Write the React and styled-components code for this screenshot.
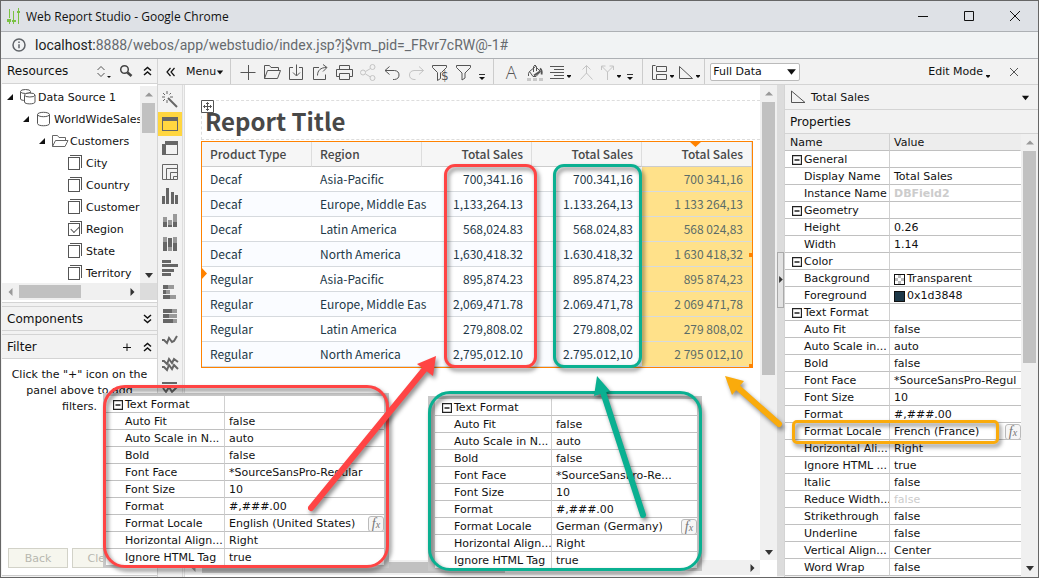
import * as React from "react";
import styled, { createGlobalStyle } from "styled-components";

const GlobalStyle = createGlobalStyle`
  * {
    box-sizing: border-box;
  }
  body {
    margin: 0;
    background: #f2f2f2;
    color: #111;
    font-family: "DejaVu Sans", Verdana, sans-serif;
    font-size: 11px;
  }
  button, select, input {
    font: inherit;
    color: inherit;
    margin: 0;
  }
`;

const Window = styled.div`
  display: flex;
  flex-direction: column;
  min-height: 100vh;
  border: 1px solid #666;
  overflow: hidden;
`;

const TitleBar = styled.header`
  display: flex;
  align-items: center;
  height: 31px;
  padding-left: 6px;
  gap: 6px;
  background: #dee1e6;
  border-bottom: 1px solid #adb0b4;
  font-family: "Open Sans", "Noto Sans", sans-serif;
  font-size: 12px;
`;

const WindowTitle = styled.span`
  flex: 1;
`;

const WindowControls = styled.div`
  display: flex;
`;

const WindowButton = styled.button`
  display: flex;
  align-items: center;
  justify-content: center;
  width: 46px;
  height: 28px;
  padding: 0;
  border: 0;
  background: none;
`;

const AddressBar = styled.div`
  display: flex;
  align-items: center;
  gap: 9px;
  height: 27px;
  padding-left: 11px;
  background: #f1f3f4;
  border-bottom: 1px solid #adb0b4;
  font-family: Roboto, "Noto Sans", sans-serif;
  font-size: 14px;
  color: #666a6e;

  b {
    font-weight: 400;
    color: #222;
  }
`;

const Workspace = styled.div`
  display: flex;
  flex: 1;
`;

const Sidebar = styled.aside`
  display: flex;
  flex-direction: column;
  width: 157px;
  flex: none;
  padding-left: 1px;
  border-right: 1px solid #d4d4d4;
`;

const PanelHeader = styled.div`
  display: flex;
  align-items: center;
  height: 25px;
  flex: none;
  padding: 0 1px 0 5px;
  margin-top: ${(p) => p.$gap || 0}px;
  background: #f2f2f2;
  border: solid #d4d4d4;
  border-width: ${(p) => (p.$gap ? "1px 0" : "0 0 1px")};
`;

const PanelTitle = styled.h2`
  flex: 1;
  margin: 0;
  font-size: 12px;
  font-weight: 400;
`;

const IconButton = styled.button`
  display: flex;
  align-items: center;
  justify-content: ${(p) => (p.$menu ? "flex-start" : "center")};
  width: ${(p) => p.$width || 24}px;
  height: 24px;
  flex: none;
  padding: 0;
  border: 0;
  background: ${(p) => (p.$active ? "#ffd640" : "none")};
  color: ${(p) => (p.$disabled ? "#c4c4c4" : "#555")};
`;

const TreeArea = styled.div`
  display: flex;
  height: 199px;
  padding-top: 2px;
  background: #fff;
`;

const Tree = styled.ul`
  flex: 1;
  min-width: 0;
  margin: 0;
  padding: 0;
  list-style: none;
  overflow: hidden;
`;

const TreeRow = styled.li`
  display: flex;
  align-items: center;
  height: 22px;
  padding-left: ${(p) => 4 + p.$level * 16}px;
  white-space: nowrap;

  label {
    display: flex;
    align-items: center;
  }
`;

const TreeSlot = styled.span`
  display: flex;
  align-items: center;
  width: ${(p) => p.$width}px;
  flex: none;
`;

const FieldCheck = styled.input`
  position: relative;
  appearance: none;
  width: 12px;
  height: 13px;
  border: 1px solid #555;
  background: #fff;
  box-shadow: 1px -1px 0 #fff, 2px -2px 0 #555;

  &:checked::after {
    content: "";
    position: absolute;
    left: 2px;
    top: 2px;
    width: 7px;
    height: 4px;
    border: solid #555;
    border-width: 0 0 1px 1px;
    transform: rotate(-45deg);
  }
`;

const ScrollTrack = styled.div`
  display: flex;
  flex-direction: ${(p) => (p.$horizontal ? "row" : "column")};
  ${(p) => (p.$horizontal ? "height" : "width")}: ${(p) => p.$size}px;
  flex: ${(p) => (p.$horizontal ? "1" : "none")};
  padding: ${(p) => (p.$horizontal ? "2px 0" : "0 2px")};
  background: #f0f0f0;
`;

const ScrollArrow = styled.span`
  display: flex;
  align-items: center;
  justify-content: center;
  ${(p) => (p.$horizontal ? "width" : "height")}: 17px;
  color: ${(p) => (p.$dim ? "#999" : "#333")};
`;

const ScrollThumb = styled.span`
  flex: ${(p) => p.$grow};
  background: #c1c1c1;
`;

const ScrollRest = styled.span`
  flex: ${(p) => p.$grow};
`;

const ScrollRow = styled.div`
  display: flex;
  flex: none;
`;

const ScrollCorner = styled.div`
  width: 17px;
  background: ${(p) => p.$color};
`;

const TreeFoot = styled.div`
  height: 3px;
  background: #fff;
  border-bottom: 1px solid #d4d4d4;
`;

const FilterBody = styled.div`
  display: flex;
  flex: 1;
  flex-direction: column;
  justify-content: space-between;
  padding: 8px 6px 7px;
  margin-bottom: 1px;
  background: #fff;
  border-bottom: 1px solid #ccc;
`;

const FilterHint = styled.p`
  margin: 0;
  line-height: 16px;
  text-align: center;
`;

const ButtonRow = styled.div`
  display: flex;
  gap: 4px;
`;

const StepButton = styled.button`
  width: 60px;
  height: 20px;
  padding: 0;
  background: #f6f6ee;
  border: 1px solid #d2d2c8;
  color: #b8b8b0;
`;

const Main = styled.div`
  display: flex;
  flex: 1;
  min-width: 0;
  flex-direction: column;
`;

const Toolbar = styled.div`
  display: flex;
  align-items: center;
  height: 26px;
  background: #f2f2f2;
  border-bottom: 1px solid #d4d4d4;
`;

const ToolGroup = styled.div`
  display: flex;
  align-items: center;
  height: 25px;
  padding: ${(p) => p.$pad || "0 5px"};
  border-right: ${(p) => (p.$last ? "0" : "1px solid #ccc")};
  margin-left: ${(p) => (p.$last ? "auto" : "0")};
`;

const TextButton = styled.button`
  display: flex;
  align-items: center;
  gap: ${(p) => p.$gap || 0}px;
  padding: 0;
  border: 0;
  background: none;
  color: #111;
`;

const FontGlyph = styled.span`
  font-family: "Open Sans", "Noto Sans", sans-serif;
  font-size: 18px;
  font-weight: 300;
  line-height: 20px;
`;

const SelectBox = styled.label`
  position: relative;
  display: flex;
  margin-left: 5px;

  svg {
    position: absolute;
    right: 3px;
    top: 3px;
    pointer-events: none;
  }
`;

const DataSelect = styled.select`
  appearance: none;
  width: 90px;
  height: 18px;
  padding: 0 2px;
  background: #fff;
  border: 1px solid #bbb;
  border-radius: 2px;
`;

const Body = styled.div`
  position: relative;
  display: grid;
  grid-template-columns: 27px minmax(0, 1fr) 7px 254px;
  flex: 1;
`;

const ChartStrip = styled.nav`
  display: flex;
  flex-direction: column;
  padding-top: 3px;
  background: #f2f2f2;
  border-right: 3px double #ddd;
`;

const CanvasArea = styled.main`
  display: flex;
  flex-direction: column;
  background: #fff;
  padding-bottom: 2px;
`;

const CanvasRow = styled.div`
  display: flex;
  flex: 1;
`;

const Page = styled.div`
  flex: 1;
  min-width: 0;
  padding: 15px 0 0 16px;
`;

const TitleBand = styled.div`
  position: relative;
  height: 40px;
  padding-left: 3px;
  margin-bottom: 1px;
  border: dashed #ddd;
  border-width: 1px 0 1px 1px;
`;

const MoveHandle = styled.span`
  position: absolute;
  left: -1px;
  top: -1px;
  display: flex;
  background: #fff;
`;

const ReportTitle = styled.h1`
  margin: 0;
  font-family: "Noto Sans CJK SC", sans-serif;
  font-size: 24px;
  font-weight: 700;
  line-height: 40px;
  color: #484848;
`;

const ReportGrid = styled.div`
  position: relative;
  width: 552px;
  border: 1px solid #ff8200;

  & > svg {
    position: absolute;
  }
`;

const ReportTable = styled.table`
  width: 100%;
  table-layout: fixed;
  border-spacing: 0;
  font-family: "Noto Sans CJK SC", sans-serif;
  font-size: 12px;
  line-height: 18px;
  color: #1d3848;
  background: #fff;

  tbody tr:nth-child(even) {
    background: #fafcff;
  }
`;

const ReportHead = styled.th`
  height: 25px;
  padding: 0 8px;
  border: solid #ddd;
  border-width: 0 1px 1px 0;
  border-bottom-color: #ccc;
  background: #f6f6f6;
  color: #484848;
  font-weight: 500;
  text-align: ${(p) => (p.$number ? "right" : "left")};
`;

const ReportCell = styled.td`
  height: 25px;
  padding: 0 ${(p) => (p.$number ? 9 : 0)}px 0 8px;
  border-bottom: 1px solid #d6dade;
  text-align: ${(p) => (p.$number ? "right" : "left")};
  white-space: nowrap;
  background: ${(p) => (p.$selected ? "#ffe18a" : "transparent")};
  color: ${(p) => (p.$selected ? "#5b6c68" : "inherit")};
`;

const ColumnMark = styled.div`
  position: absolute;
  top: 22px;
  bottom: -1px;
  left: ${(p) => p.$left}px;
  width: ${(p) => p.$width}px;
  border: 3px solid ${(p) => p.$color};
  border-radius: 11px;
  filter: drop-shadow(2px 3px 2px rgba(0, 0, 0, 0.5));
  pointer-events: none;
`;

const Splitter = styled.div`
  display: flex;
  align-items: center;
  padding-bottom: 102px;
  margin-bottom: 1px;
  background: #dcdcdc;
`;

const SplitHandle = styled.button`
  display: flex;
  align-items: center;
  justify-content: center;
  width: 7px;
  height: 56px;
  padding: 0;
  background: #e2e2e2;
  border: 1px solid #aaa;
  color: #333;

  svg {
    flex: none;
  }
`;

const Properties = styled.section`
  position: relative;
  border-left: 1px solid #d4d4d4;
`;

const ObjectBar = styled.div`
  display: flex;
  align-items: center;
  gap: 5px;
  height: ${(p) => p.$height}px;
  padding: 0 8px 0 5px;
  border-bottom: 1px solid #d4d4d4;

  span {
    flex: 1;
  }
`;

const PropertyBody = styled.div`
  display: flex;
`;

const PropTable = styled.table`
  width: 100%;
  flex: 1;
  min-width: 0;
  table-layout: fixed;
  border-spacing: 0;
  background: #fff;
  line-height: 14px;
`;

const PropName = styled.td`
  height: 17px;
  padding: 0 0 0 ${(p) => (p.$group ? 7 : 19)}px;
  border: solid #c0c0c0;
  border-width: 0 1px 1px 0;
  border-right-color: #d0d0d0;
  white-space: nowrap;
  overflow: hidden;
`;

const PropValue = styled.td`
  height: 17px;
  padding: 0 0 0 4px;
  border-bottom: 1px solid #c0c0c0;
  color: ${(p) => (p.$dim ? "#ccc" : "inherit")};
  font-weight: ${(p) => (p.$strong ? 700 : 400)};
  white-space: nowrap;
  overflow: hidden;
`;

const PropHead = styled.th`
  height: 17px;
  padding: 1px 0 0 ${(p) => p.$pad}px;
  background: #ededed;
  border: solid #c0c0c0;
  border-width: 0 1px 1px 0;
  border-right-color: ${(p) => (p.$last ? "#ededed" : "#d0d0d0")};
  font-weight: 400;
  text-align: left;
`;

const PropLine = styled.div`
  display: flex;
  align-items: center;
  gap: 2px;
  height: 16px;
  padding-top: 2px;

  svg {
    flex: none;
  }
`;

const Swatch = styled.span`
  width: 11px;
  height: 11px;
  border: 1px solid #111;
  background: ${(p) =>
    p.$color ||
    "repeating-conic-gradient(#bbb 0% 25%, #fff 0% 50%) 0 0 / 6px 6px"};
`;

const FxButton = styled.button`
  width: 16px;
  height: 16px;
  flex: none;
  margin-left: auto;
  padding: 0;
  background: #f6f6f6;
  border: 1px solid #bbb;
  border-radius: 3px;
  color: #777;
  font-family: "Liberation Serif", serif;
  font-size: 14px;
  font-style: italic;
  line-height: 12px;

  small {
    font-size: 10px;
  }
`;

const LocaleMark = styled.div`
  position: absolute;
  left: 7px;
  top: 335px;
  width: 207px;
  height: 24px;
  border: 3px solid #faab0c;
  border-radius: 5px;
  filter: drop-shadow(2px 3px 2px rgba(0, 0, 0, 0.5));
  pointer-events: none;
`;

const Callout = styled.figure`
  position: absolute;
  left: ${(p) => p.$left}px;
  top: ${(p) => p.$top}px;
  width: ${(p) => p.$width}px;
  margin: 0;
  padding-top: ${(p) => p.$pad}px;

  &::after {
    content: "";
    position: absolute;
    inset: 0;
    border: 3px solid ${(p) => p.$color};
    border-radius: 22px;
    filter: drop-shadow(2px 3px 2px rgba(0, 0, 0, 0.55));
    pointer-events: none;
  }
`;

const Sheet = styled.div`
  display: flex;
  padding: 3px 5px 2px ${(p) => p.$inset}px;
  background: #c8c8c8;
`;

const Arrows = styled.svg`
  position: absolute;
  left: 0;
  top: 0;
  filter: drop-shadow(2px 3px 2px rgba(0, 0, 0, 0.45));
  pointer-events: none;
`;

const drawings = {
  plus: <path d="M2.500 10.500h15M10.500 3v15" />,
  open: (
    <path d="M2.500 16.500v-13h5l1.500 2h7.500v3M2.500 16.500l3-8h13l-3 8z" />
  ),
  download: (
    <path d="M7 5.500H3.500v12h13v-12H13M10.500 2.500v11M7 10.500l3.500 3.500 3.500-3.500" />
  ),
  share: <path d="M9 5.500H3.500v12h12v-5M7.500 13.500c0-5 3-8 9-8M13 2.500l4 3-4 4" />,
  print: (
    <path d="M5.500 7V3.500h10V7M5.500 14.500h-3V7.500h16v7h-3M5.500 11.500h10v6h-10z" />
  ),
  nodes: (
    <g>
      <circle cx="5" cy="10.500" r="2.500" />
      <circle cx="14.500" cy="5" r="2.500" />
      <circle cx="14.500" cy="16" r="2.500" />
      <path d="M7.500 9.500 12.500 6.500M7.500 12l5 3" />
    </g>
  ),
  undo: (
    <path d="M7.500 4.500 3 8.500l4.500 4M3 8.500h9.500q4.500.500 4.500 4.500t-4.500 4.500H11" />
  ),
  redo: (
    <path d="M13 4.500 17.500 8.500 13 12.500M17.500 8.500H8q-4.500.500-4.500 4.500T8 17.500h1.500" />
  ),
  filterMoney: (
    <g>
      <path d="M2.500 3.500h14v2l-5 5M2.500 3.500v2l5 5v8l3-2v-6" />
      <text x="11" y="18" fontSize="12" fill="currentColor" stroke="none">
        $
      </text>
    </g>
  ),
  filter: <path d="M2.500 3.500h14v2l-5.500 5.500v5l-3 2v-7L2.500 5.500z" />,
  fill: (
    <g>
      <path d="M4.500 9.500 10.500 4.500l5 5-4.500 5H8zM8.500 10V4.500q1.500-3 3 0V9M4.500 9.500Q3 11 3.500 14" />
      <path d="M9 13.500l6-4" strokeWidth="2" />
      <path d="M15 6.500q2.500 2 1.500 6" strokeWidth="1.800" />
      <path d="M2 17.500h16" stroke="#c8c8c8" strokeWidth="3" strokeDasharray="4 2" />
    </g>
  ),
  align: <path d="M3 4.500h14M7 7.500h10M3 10.500h14M7 13.500h10M3 16.500h14" />,
  merge: <path d="M10.500 3.500v8M6.500 7.500l4-4 4 4M10.500 11 4.500 17.500M10.500 11l6 6.500" />,
  split: <path d="M10.500 18v-8L4.500 4M10.500 10l6-6M4.500 8V4h4M16.500 8V4h-4" />,
  layout: <path d="M5.500 3.500h-3v14h3M6.500 4.500h10v5h-10zM6.500 12.500h10v5h-10z" />,
  ruler: <path d="M3.500 4.500v12h13z" />,
};

const charts = {
  wand: (
    <g fill="none" stroke="#666">
      <path d="M8 8l9 9" strokeWidth="2" />
      <path d="M7 1v3M7 10v3M2 7h3M10 7h3M3 3l2 2M11 3 9.500 4.500M3 11l2-2" />
    </g>
  ),
  table: <path d="M2 3h16v14H2zM3 7v9h14V7z" fillRule="evenodd" />,
  crosstab: (
    <path d="M5 3h13v14H5zM6 7v9h11V7zM2 6h3v11H2z" fillRule="evenodd" />
  ),
  panel: (
    <path
      d="M2.500 2.500h15v15h-15zM6.500 17.500v-11h11M10.500 17.500v-7h7M13.500 17.500v-3h4"
      fill="none"
      stroke="#666"
    />
  ),
  bar: <path d="M2 10h3v8H2zM6 2h3v16H6zM11 6h3v12h-3zM15 9h3v9h-3z" />,
  stacked: (
    <g>
      <path d="M3 12h4v5H3zM8 15h4v2H8zM13 12h4v5h-4z" />
      <path d="M3 7h4v5H3zM8 10h4v5H8zM13 4h4v8h-4z" fill="#999" />
    </g>
  ),
  percent: (
    <g>
      <path d="M3 8h4v9H3zM8 4h4v9H8zM13 9h4v8h-4z" />
      <path d="M3 3h4v5H3zM8 13h4v4H8zM13 3h4v6h-4z" fill="#999" />
    </g>
  ),
  bench: <path d="M2 2h9v3H2zM2 6h16v3H2zM2 11h12v3H2zM2 15h9v3H2z" />,
  benchStacked: (
    <g>
      <path d="M3 3h5v4H3zM3 8h3v4H3zM3 13h7v4H3z" />
      <path d="M8 3h6v4H8zM6 8h4v4H6zM10 13h6v4h-6z" fill="#999" />
    </g>
  ),
  benchPercent: (
    <g>
      <path d="M3 3h9v4H3zM3 8h6v4H3zM3 13h10v4H3z" />
      <path d="M12 3h5v4h-5zM9 8h8v4H9zM13 13h4v4h-4z" fill="#999" />
    </g>
  ),
  line: (
    <path
      d="M2 10h2l3 3 2-5 3 4 2-1 3-5"
      fill="none"
      stroke="#666"
      strokeWidth="2"
    />
  ),
  lines: (
    <path
      d="M2 7h2l3 3 2-5 3 4 2-4 4 3M2 13h2l3 3 2-5 3 4 2-4 4 4"
      fill="none"
      stroke="#666"
      strokeWidth="2"
    />
  ),
  combo: (
    <g>
      <path d="M2 4h15v2H2z" />
      <path d="M3 10l3 4 3-5 3 5 5-5" fill="none" stroke="#666" strokeWidth="2" />
    </g>
  ),
};

const trianglePaths = {
  up: "M1 6.500 5 2.500l4 4z",
  down: "M1 3 5 8l4-5z",
  left: "M6.500 1 2.500 5l4 4z",
  right: "M3.500 1 7.500 5l-4 4z",
};

const Drawing = ({ name }) => (
  <svg width="20" height="20" fill="none" stroke="currentColor">
    {drawings[name]}
  </svg>
);

const Triangle = ({ to, size = 10 }) => (
  <svg width={size} height={size} viewBox="0 0 10 10" fill="currentColor">
    <path d={trianglePaths[to]} />
  </svg>
);

const Dot = () => (
  <svg width="4" height="20" fill="#111">
    <path d="M0 13h4v1L2 16 0 14z" />
  </svg>
);

const Chevrons = ({ down }) => (
  <svg width="9" height="10" fill="none" stroke="#111" strokeWidth="1.500">
    <path
      d={
        down
          ? "M1 1l3.500 3L8 1M1 5.500 4.500 8.500 8 5.500"
          : "M1 4.500 4.500 1.500 8 4.500M1 9l3.500-3L8 9"
      }
    />
  </svg>
);

const Overflow = () => (
  <svg width="8" height="20">
    <path d="M1 12.500h6" stroke="#333" />
    <path d="M1 15h6l-3 3z" fill="#111" />
  </svg>
);

const ToolButton = ({ name, menu, ...rest }) => (
  <IconButton aria-label={name} $menu={menu} {...rest}>
    <Drawing name={name} />
    {menu && <Dot />}
  </IconButton>
);

const ScrollBar = ({ horizontal, size = 17, thumb, rest }) => (
  <ScrollTrack $horizontal={horizontal} $size={size}>
    <ScrollArrow $horizontal={horizontal} $dim>
      <Triangle to={horizontal ? "left" : "up"} />
    </ScrollArrow>
    <ScrollThumb $grow={thumb} />
    <ScrollRest $grow={rest} />
    <ScrollArrow $horizontal={horizontal}>
      <Triangle to={horizontal ? "right" : "down"} />
    </ScrollArrow>
  </ScrollTrack>
);

const Cylinder = () => (
  <svg width="16" height="16" fill="#fff" stroke="#555">
    <path d="M1.500 3.500v9c0 3 12 3 12 0v-9" />
    <ellipse cx="7.500" cy="3.500" rx="6" ry="2.200" />
  </svg>
);

const Cylinders = () => (
  <svg width="16" height="16" fill="#fff" stroke="#555">
    <path d="M.500 3v7c0 2 10 2 10 0V3" />
    <ellipse cx="5.500" cy="2.500" rx="5" ry="2" />
    <path d="M4.500 6v7c0 2.500 10.500 2.500 10.500 0V6" />
    <ellipse cx="9.750" cy="6" rx="5.250" ry="2" />
  </svg>
);

const FolderIcon = () => (
  <svg width="17" height="14" fill="none" stroke="#666">
    <path d="M.500 12.500v-11h5l1.500 2h6.500v3M.500 12.500l3-6h12.500l-3 6z" />
  </svg>
);

const Collapse = () => (
  <svg width="10" height="10" fill="#fff" stroke="#222">
    <path d="M.5.5h9v9h-9zM2.500 5h5" strokeWidth="1.300" />
  </svg>
);

const treeItems = [
  { level: 0, text: "Data Source 1", icon: <Cylinders /> },
  { level: 1, text: "WorldWideSales", icon: <Cylinder /> },
  { level: 2, text: "Customers", icon: <FolderIcon /> },
  { level: 3, text: "City" },
  { level: 3, text: "Country" },
  { level: 3, text: "Customer" },
  { level: 3, text: "Region", checked: true },
  { level: 3, text: "State" },
  { level: 3, text: "Territory" },
];

const salesRows = [
  ["Decaf", "Asia-Pacific", "700,341.16"],
  ["Decaf", "Europe, Middle Eas", "1,133,264.13"],
  ["Decaf", "Latin America", "568,024.83"],
  ["Decaf", "North America", "1,630,418.32"],
  ["Regular", "Asia-Pacific", "895,874.23"],
  ["Regular", "Europe, Middle Eas", "2,069,471.78"],
  ["Regular", "Latin America", "279,808.02"],
  ["Regular", "North America", "2,795,012.10"],
];

const toGerman = (n) => n.replace(/[.,]/g, (c) => (c === "," ? "." : ","));
const toFrench = (n) => n.replace(/[.,]/g, (c) => (c === "," ? " " : ","));

const propertyRows = [
  { group: "General" },
  { name: "Display Name", value: "Total Sales" },
  { name: "Instance Name", value: "DBField2", dim: true, strong: true },
  { group: "Geometry" },
  { name: "Height", value: "0.26" },
  { name: "Width", value: "1.14" },
  { group: "Color" },
  { name: "Background", value: "Transparent", swatch: true },
  { name: "Foreground", value: "0x1d3848", swatch: true, color: "#1d3848" },
  { group: "Text Format" },
  { name: "Auto Fit", value: "false" },
  { name: "Auto Scale in...", value: "auto" },
  { name: "Bold", value: "false" },
  { name: "Font Face", value: "*SourceSansPro-Regul" },
  { name: "Font Size", value: "10" },
  { name: "Format", value: "#,###.00" },
  { name: "Format Locale", value: "French (France)", fx: true },
  { name: "Horizontal Ali...", value: "Right" },
  { name: "Ignore HTML ...", value: "true" },
  { name: "Italic", value: "false" },
  { name: "Reduce Width...", value: "false", dim: true },
  { name: "Strikethrough", value: "false" },
  { name: "Underline", value: "false" },
  { name: "Vertical Align...", value: "Center" },
  { name: "Word Wrap", value: "false" },
];

const calloutRows = (face, locale) => [
  { group: "Text Format" },
  { name: "Auto Fit", value: "false" },
  { name: "Auto Scale in N...", value: "auto" },
  { name: "Bold", value: "false" },
  { name: "Font Face", value: face },
  { name: "Font Size", value: "10" },
  { name: "Format", value: "#,###.00" },
  { name: "Format Locale", value: locale, fx: true },
  { name: "Horizontal Align...", value: "Right" },
  { name: "Ignore HTML Tag", value: "true" },
];

const PropertyTable = ({ rows, nameWidth, header }) => (
  <PropTable>
    <colgroup>
      <col width={nameWidth} />
      <col />
    </colgroup>
    {header && (
      <thead>
        <tr>
          <PropHead $pad={5}>Name</PropHead>
          <PropHead $pad={4} $last>
            Value
          </PropHead>
        </tr>
      </thead>
    )}
    <tbody>
      {rows.map((row) => (
        <tr key={row.group || row.name}>
          <PropName $group={row.group}>
            <PropLine>
              {row.group && <Collapse />}
              {row.group || row.name}
            </PropLine>
          </PropName>
          <PropValue $dim={row.dim} $strong={row.strong}>
            <PropLine>
              {row.swatch && <Swatch $color={row.color} />}
              {row.value}
              {row.fx && (
                <FxButton aria-label="Formula">
                  f<small>x</small>
                </FxButton>
              )}
            </PropLine>
          </PropValue>
        </tr>
      ))}
    </tbody>
  </PropTable>
);

const ResourcesPanel = () => (
  <Sidebar>
    <PanelHeader>
      <PanelTitle>Resources</PanelTitle>
      <IconButton $width={20} aria-label="Sort">
        <svg width="16" height="20" fill="none" stroke="#555">
          <path d="M1.500 9 5 5.500 8.500 9M1.500 12 5 15.500 8.500 12" />
          <path d="M11 15h4l-2 2z" fill="#111" stroke="none" />
        </svg>
      </IconButton>
      <IconButton $width={24} aria-label="Search">
        <svg width="14" height="14" fill="none" stroke="#444" strokeWidth="1.500">
          <circle cx="5.500" cy="5.500" r="3.800" />
          <path d="M8.500 8.500l4 3.500" strokeWidth="2.600" />
        </svg>
      </IconButton>
      <IconButton $width={18} aria-label="Collapse resources">
        <Chevrons />
      </IconButton>
    </PanelHeader>
    <TreeArea>
      <Tree>
        {treeItems.map((item) => (
          <TreeRow key={item.text} $level={item.level}>
            <TreeSlot $width={14}>
              {item.icon && (
                <svg width="8" height="8" fill="#111">
                  <path d="M7 1v6H1z" />
                </svg>
              )}
            </TreeSlot>
            {item.icon ? (
              <>
                <TreeSlot $width={18}>{item.icon}</TreeSlot>
                {item.text}
              </>
            ) : (
              <label>
                <TreeSlot $width={18}>
                  <FieldCheck type="checkbox" defaultChecked={item.checked} />
                </TreeSlot>
                {item.text}
              </label>
            )}
          </TreeRow>
        ))}
      </Tree>
      <ScrollBar thumb={30} rest={133} />
    </TreeArea>
    <ScrollRow>
      <ScrollBar horizontal thumb={62} rest={42} />
      <ScrollCorner $color="#dcdcdc" />
    </ScrollRow>
    <TreeFoot />
    <PanelHeader $gap={3}>
      <PanelTitle>Components</PanelTitle>
      <IconButton $width={18} aria-label="Expand components">
        <Chevrons down />
      </IconButton>
    </PanelHeader>
    <PanelHeader $gap={3}>
      <PanelTitle>Filter</PanelTitle>
      <IconButton $width={22} aria-label="Add filter">
        <svg width="8" height="8" stroke="#111">
          <path d="M0 4.500h8M4 .5v8" />
        </svg>
      </IconButton>
      <IconButton $width={18} aria-label="Collapse filter">
        <Chevrons />
      </IconButton>
    </PanelHeader>
    <FilterBody>
      <FilterHint>Click the "+" icon on the panel above to add filters.</FilterHint>
      <ButtonRow>
        <StepButton disabled>Back</StepButton>
        <StepButton disabled>Clear</StepButton>
      </ButtonRow>
    </FilterBody>
  </Sidebar>
);

const StudioToolbar = () => (
  <Toolbar>
    <ToolGroup $pad="0 6px 0 5px">
      <IconButton $width={23} aria-label="Collapse sidebar">
        <svg width="18" height="10" fill="none" stroke="#111" strokeWidth="1.200">
          <path d="M4.500 1 1 5l3.500 4M8.500 1 5 5l3.500 4" />
        </svg>
      </IconButton>
      <TextButton>
        Menu
        <Triangle to="down" size={8} />
      </TextButton>
    </ToolGroup>
    <ToolGroup>
      <ToolButton name="plus" />
      <ToolButton name="open" />
      <ToolButton name="download" />
      <ToolButton name="share" />
      <ToolButton name="print" />
      <ToolButton name="nodes" $disabled />
      <ToolButton name="undo" />
      <ToolButton name="redo" $disabled />
      <ToolButton name="filterMoney" />
      <ToolButton name="filter" />
      <IconButton $width={12} aria-label="More actions">
        <Overflow />
      </IconButton>
    </ToolGroup>
    <ToolGroup>
      <IconButton aria-label="Font">
        <FontGlyph>A</FontGlyph>
      </IconButton>
      <ToolButton name="fill" />
      <ToolButton name="align" menu $width={28} />
      <ToolButton name="merge" $disabled $width={22} />
      <ToolButton name="split" menu $disabled $width={26} />
      <IconButton $width={14} aria-label="More formatting">
        <Overflow />
      </IconButton>
    </ToolGroup>
    <ToolGroup $pad="0 3px 0 7px">
      <ToolButton name="layout" menu $width={26} />
      <ToolButton name="ruler" menu $width={25} />
    </ToolGroup>
    <SelectBox>
      <DataSelect aria-label="Data mode" defaultValue="full">
        <option value="full">Full Data</option>
      </DataSelect>
      <Triangle to="down" size={11} />
    </SelectBox>
    <ToolGroup $last $pad="0">
      <TextButton $gap={3}>
        Edit Mode
        <Dot />
      </TextButton>
      <IconButton $width={48} aria-label="Close">
        <svg width="10" height="10" stroke="#555">
          <path d="M1 1l8 8M9 1 1 9" />
        </svg>
      </IconButton>
    </ToolGroup>
  </Toolbar>
);

const Report = () => (
  <Page>
    <TitleBand>
      <ReportTitle>Report Title</ReportTitle>
      <MoveHandle>
        <svg width="13" height="13" fill="none" stroke="#555">
          <path d="M.5.5h12v12H.500zM6.500 2.500v8M2.500 6.500h8M5 4l1.500-1.500L8 4M5 9l1.500 1.500L8 9M4 5 2.500 6.500 4 8M9 5l1.500 1.500L9 8" />
        </svg>
      </MoveHandle>
    </TitleBand>
    <ReportGrid>
      <ReportTable>
        <thead>
          <tr>
            <ReportHead>Product Type</ReportHead>
            <ReportHead>Region</ReportHead>
            <ReportHead $number>Total Sales</ReportHead>
            <ReportHead $number>Total Sales</ReportHead>
            <ReportHead $number>Total Sales</ReportHead>
          </tr>
        </thead>
        <tbody>
          {salesRows.map(([type, region, amount]) => (
            <tr key={amount}>
              <ReportCell>{type}</ReportCell>
              <ReportCell>{region}</ReportCell>
              <ReportCell $number>{amount}</ReportCell>
              <ReportCell $number>{toGerman(amount)}</ReportCell>
              <ReportCell $number $selected>
                {toFrench(amount)}
              </ReportCell>
            </tr>
          ))}
        </tbody>
      </ReportTable>
      <svg width="552" height="228" style={{ left: -1, top: -1 }} fill="#ff8200">
        <path d="M488 0h13l-6.500 6zM0 126v13l6-6.500zM548 112h4v4h-4zM548 223h4v4h-4z" />
      </svg>
      <ColumnMark $left={242} $width={93} $color="#ff4444" />
      <ColumnMark $left={351} $width={89} $color="#0ab091" />
    </ReportGrid>
  </Page>
);

const PropertiesPanel = () => (
  <Properties>
    <ObjectBar $height={25}>
      <svg width="16" height="14" fill="none" stroke="#555">
        <path d="M1.500 1v11.500H15z" />
      </svg>
      <span>Total Sales</span>
      <Triangle to="down" size={9} />
    </ObjectBar>
    <ObjectBar $height={24}>
      <PanelTitle>Properties</PanelTitle>
    </ObjectBar>
    <PropertyBody>
      <PropertyTable rows={propertyRows} nameWidth={105} header />
      <ScrollBar thumb={212} rest={196} />
    </PropertyBody>
    <LocaleMark />
  </Properties>
);

const App = () => {
  return (
    <>
      <GlobalStyle />
      <Window>
        <TitleBar>
          <svg width="13" height="18" fill="#7ac143">
            <path d="M2 2h1v9H2zM2 12h1v5H2zM6 4h1v13H6zM11 1h1v16h-1zM0 12h4v3H0zM5 13h4v2H5zM10 4h3v2h-3z" />
          </svg>
          <WindowTitle>Web Report Studio - Google Chrome</WindowTitle>
          <WindowControls>
            <WindowButton aria-label="Minimize">
              <svg width="10" height="10" stroke="#111">
                <path d="M0 5.500h10" />
              </svg>
            </WindowButton>
            <WindowButton aria-label="Maximize">
              <svg width="10" height="10" stroke="#111" fill="none">
                <path d="M.5.5h9v9h-9z" />
              </svg>
            </WindowButton>
            <WindowButton aria-label="Close window">
              <svg width="10" height="10" stroke="#111">
                <path d="M0 0l10 10M10 0 0 10" />
              </svg>
            </WindowButton>
          </WindowControls>
        </TitleBar>
        <AddressBar>
          <svg width="14" height="14" fill="none" stroke="#5f6368" strokeWidth="1.500">
            <circle cx="7" cy="7" r="6" />
            <path d="M7 6.200v4M7 3.500V5" />
          </svg>
          <span>
            <b>localhost:</b>8888/webos/app/webstudio/index.jsp?j$vm_pid=_FRvr7cRW@-1#
          </span>
        </AddressBar>
        <Workspace>
          <ResourcesPanel />
          <Main>
            <StudioToolbar />
            <Body>
              <ChartStrip>
                {Object.keys(charts).map((name) => (
                  <IconButton key={name} aria-label={name} $active={name === "table"}>
                    <svg width="20" height="20" fill="#666">
                      {charts[name]}
                    </svg>
                  </IconButton>
                ))}
              </ChartStrip>
              <CanvasArea>
                <CanvasRow>
                  <Report />
                  <ScrollBar thumb={273} rest={168} />
                </CanvasRow>
                <ScrollRow>
                  <ScrollBar horizontal size={15} thumb={303} rest={238} />
                  <ScrollCorner $color="#fff" />
                </ScrollRow>
              </CanvasArea>
              <Splitter>
                <SplitHandle aria-label="Hide properties">
                  <Triangle to="right" size={9} />
                </SplitHandle>
              </Splitter>
              <PropertiesPanel />
              <Callout $left={-55} $top={300} $width={286} $pad={8} $color="#ff4444">
                <Sheet $inset={3}>
                  <PropertyTable
                    rows={calloutRows("*SourceSansPro-Regular", "English (United States)")}
                    nameWidth={119}
                  />
                </Sheet>
              </Callout>
              <Callout $left={270} $top={306} $width={274} $pad={5} $color="#0ab091">
                <Sheet $inset={7}>
                  <PropertyTable
                    rows={calloutRows("*SourceSansPro-Re...", "German (Germany)")}
                    nameWidth={117}
                  />
                </Sheet>
              </Callout>
              <Arrows width="640" height="460" viewBox="158 85 640 460">
                <g fill="none" strokeWidth="6" strokeLinecap="round">
                  <path d="M311 508 424 370" stroke="#ff4444" />
                  <path d="M643 515 603 392" stroke="#0ab091" />
                  <path d="M779 424 736 386" stroke="#faab0c" />
                </g>
                <path d="M436 356 433 376 417 364z" fill="#ff4444" />
                <path d="M597 376 610 391 594 396z" fill="#0ab091" />
                <path d="M725 376 744 381 732 395z" fill="#faab0c" />
              </Arrows>
            </Body>
          </Main>
        </Workspace>
      </Window>
    </>
  );
};

export default App;
